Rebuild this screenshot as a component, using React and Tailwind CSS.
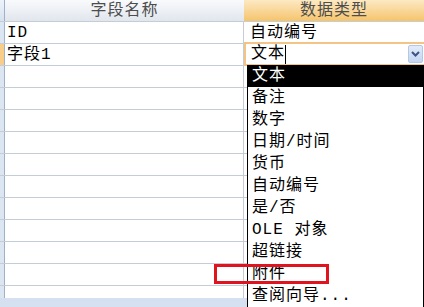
import React from "react";

/* Access design-view grid with the data-type dropdown open */
const FONT = { fontFamily: "'Liberation Mono', 'Noto Sans CJK SC', monospace" };

const rows = [
    { name: "ID", type: "自动编号" },
    { name: "字段1", type: "", active: true },
    ...Array.from({ length: 10 }, () => ({ name: "", type: "" })),
];

const types = [
    "文本", "备注", "数字", "日期/时间", "货币", "自动编号",
    "是/否", "OLE 对象", "超链接", "附件", "查阅向导...",
];

function Chevron() {
    return (
        <svg width="9" height="6" viewBox="0 0 9 6">
            <polyline points="1,1 4.5,4.5 8,1" fill="none" stroke="#3c5487" strokeWidth="2" />
        </svg>
    );
}

export default function App() {
    return (
        <div
            className="relative w-[424px] h-[307px] overflow-hidden bg-white text-[16px] tracking-[1px] text-black"
            style={FONT}
        >
            {/* header */}
            <div className="flex h-[22px] border-b border-[#c4ccd6]">
                <div className="w-[5px] border-r border-[#9fb1c8] bg-gradient-to-b from-[#eef3fa] to-[#d6e2f1]" />
                <div className="w-[239px] flex items-center justify-center bg-gradient-to-b from-[#f9fafc] to-[#e1e6ed] text-[#4d4d4d]">
                    字段名称
                </div>
                <div className="flex-1 flex items-center justify-center bg-gradient-to-b from-[#fce9c3] to-[#f5c46a] text-[#4d4d4d]">
                    数据类型
                </div>
            </div>

            {/* rows */}
            {rows.map((r, i) => (
                <div key={i} className="flex h-[22px] border-b border-[#c4ccd6]">
                    <div
                        className={
                            r.active
                                ? "w-[5px] border-r border-[#9fb1c8] bg-[#f8cd8a]"
                                : "w-[5px] border-r border-[#9fb1c8] bg-[#dce6f3]"
                        }
                    />
                    <div className="w-[239px] border-r border-[#c4ccd6] flex items-center pl-[2px] leading-none">
                        {r.name}
                    </div>
                    <div className="flex-1 flex items-center pl-[6px] leading-none">{r.type}</div>
                </div>
            ))}
            <div className="flex h-[12px]">
                <div className="w-[5px] border-r border-[#9fb1c8] bg-[#dce6f3]" />
                <div className="w-[239px] border-r border-[#c4ccd6]" />
            </div>
            <div className="h-[40px] bg-[#d5e1f0]" />

            {/* focused cell */}
            <div className="absolute left-[244px] top-[42px] w-[184px] h-[24px] border-2 border-[#f4c487] bg-white flex items-center pl-[5px] leading-none">
                <span>文本</span>
                <span className="w-px h-[19px] bg-black" />
            </div>
            <div className="absolute left-[408px] top-[45px] w-[15px] h-[18px] rounded-[2px] border border-[#b4c7e6] bg-gradient-to-b from-[#e3ecf9] to-[#c4d6f1] flex items-center justify-center">
                <Chevron />
            </div>

            {/* dropdown list */}
            <div className="absolute left-[247px] top-[65px] w-[177px] bg-white border-x border-black">
                {types.map((t, i) => (
                    <div
                        key={t}
                        className={
                            i === 0
                                ? "h-[22px] flex items-center pl-[4px] bg-black text-white leading-none"
                                : "h-[22px] flex items-center pl-[4px] leading-none"
                        }
                    >
                        {t}
                    </div>
                ))}
            </div>

            {/* highlight */}
            <div className="absolute left-[214px] top-[264px] w-[115px] h-[20px] border-[3px] border-[#e0141e]" />
        </div>
    );
}
